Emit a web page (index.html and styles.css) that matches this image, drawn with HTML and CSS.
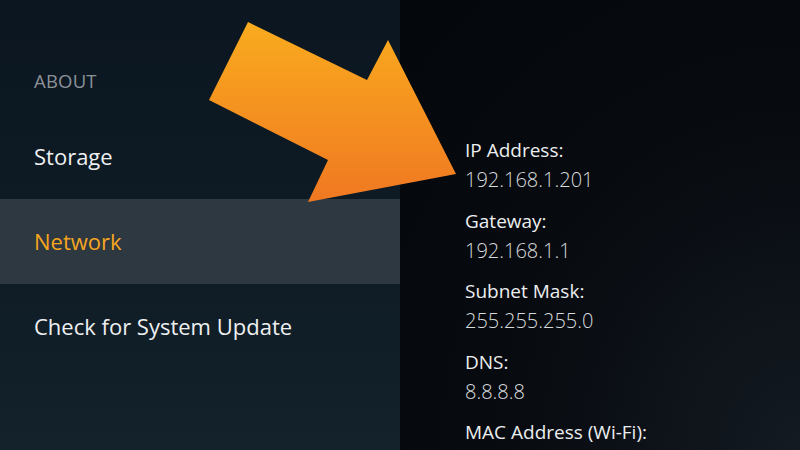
FILE: index.html
```html
<!DOCTYPE html>
<html>
<head>
<meta charset="utf-8">
<link rel="stylesheet" href="styles.css">
</head>
<body>
<div class="screen">
  <div class="menu">
    <div class="header">ABOUT</div>
    <div class="item">Storage</div>
    <div class="item selected">Network</div>
    <div class="item">Check for System Update</div>
  </div>
  <div class="details">
    <div class="group"><div class="label">IP Address:</div><div class="value">192.168.1.201</div></div>
    <div class="group"><div class="label">Gateway:</div><div class="value">192.168.1.1</div></div>
    <div class="group"><div class="label">Subnet Mask:</div><div class="value">255.255.255.0</div></div>
    <div class="group"><div class="label">DNS:</div><div class="value">8.8.8.8</div></div>
    <div class="group"><div class="label">MAC Address (Wi-Fi):</div></div>
  </div>
  <svg class="arrow" width="800" height="450" viewBox="0 0 800 450">
    <defs>
      <linearGradient id="ag" x1="0" y1="0" x2="0" y2="1">
        <stop offset="0" stop-color="#f9ab1e"/>
        <stop offset="1" stop-color="#f07822"/>
      </linearGradient>
    </defs>
    <polygon points="248,22 367,80 388,40 456,174 308,202 328,160 209,100" fill="url(#ag)"/>
  </svg>
</div>
</body>
</html>
```
FILE: styles.css
```css
html, body {
  margin: 0;
  padding: 0;
  width: 800px;
  height: 450px;
  overflow: hidden;
  background: #05080c;
}
.screen {
  position: relative;
  display: flex;
  width: 800px;
  height: 450px;
  font-family: "Open Sans", "Noto Sans", sans-serif;
}
.menu {
  width: 400px;
  flex: none;
  display: flex;
  flex-direction: column;
  padding-top: 66px;
  box-sizing: border-box;
  background: linear-gradient(180deg, #0b1620 0%, #0f1c25 60%, #13222b 100%);
}
.header {
  padding-left: 34px;
  height: 48px;
  font-size: 18.5px;
  line-height: 30px;
  color: #8b9298;
  letter-spacing: 0.2px;
}
.item {
  height: 85px;
  display: flex;
  align-items: center;
  padding-left: 34px;
  padding-bottom: 2px;
  box-sizing: border-box;
  font-size: 22px;
  color: #eef0f1;
}
.item.selected {
  background: #2d3840;
  color: #f7a51f;
}
.details {
  flex: 1;
  padding: 136px 0 0 65px;
  display: flex;
  flex-direction: column;
  gap: 12.5px;
  background: radial-gradient(ellipse at 100% 100%, #131a21 0%, #070a0f 55%, #04070b 100%);
}
.group {
  display: flex;
  flex-direction: column;
}
.label {
  font-size: 19px;
  line-height: 29px;
  color: #eceeef;
}
.value {
  font-size: 20px;
  line-height: 29px;
  font-weight: 300;
  color: #d8dbdd;
}
.arrow {
  position: absolute;
  left: 0;
  top: 0;
}
```
